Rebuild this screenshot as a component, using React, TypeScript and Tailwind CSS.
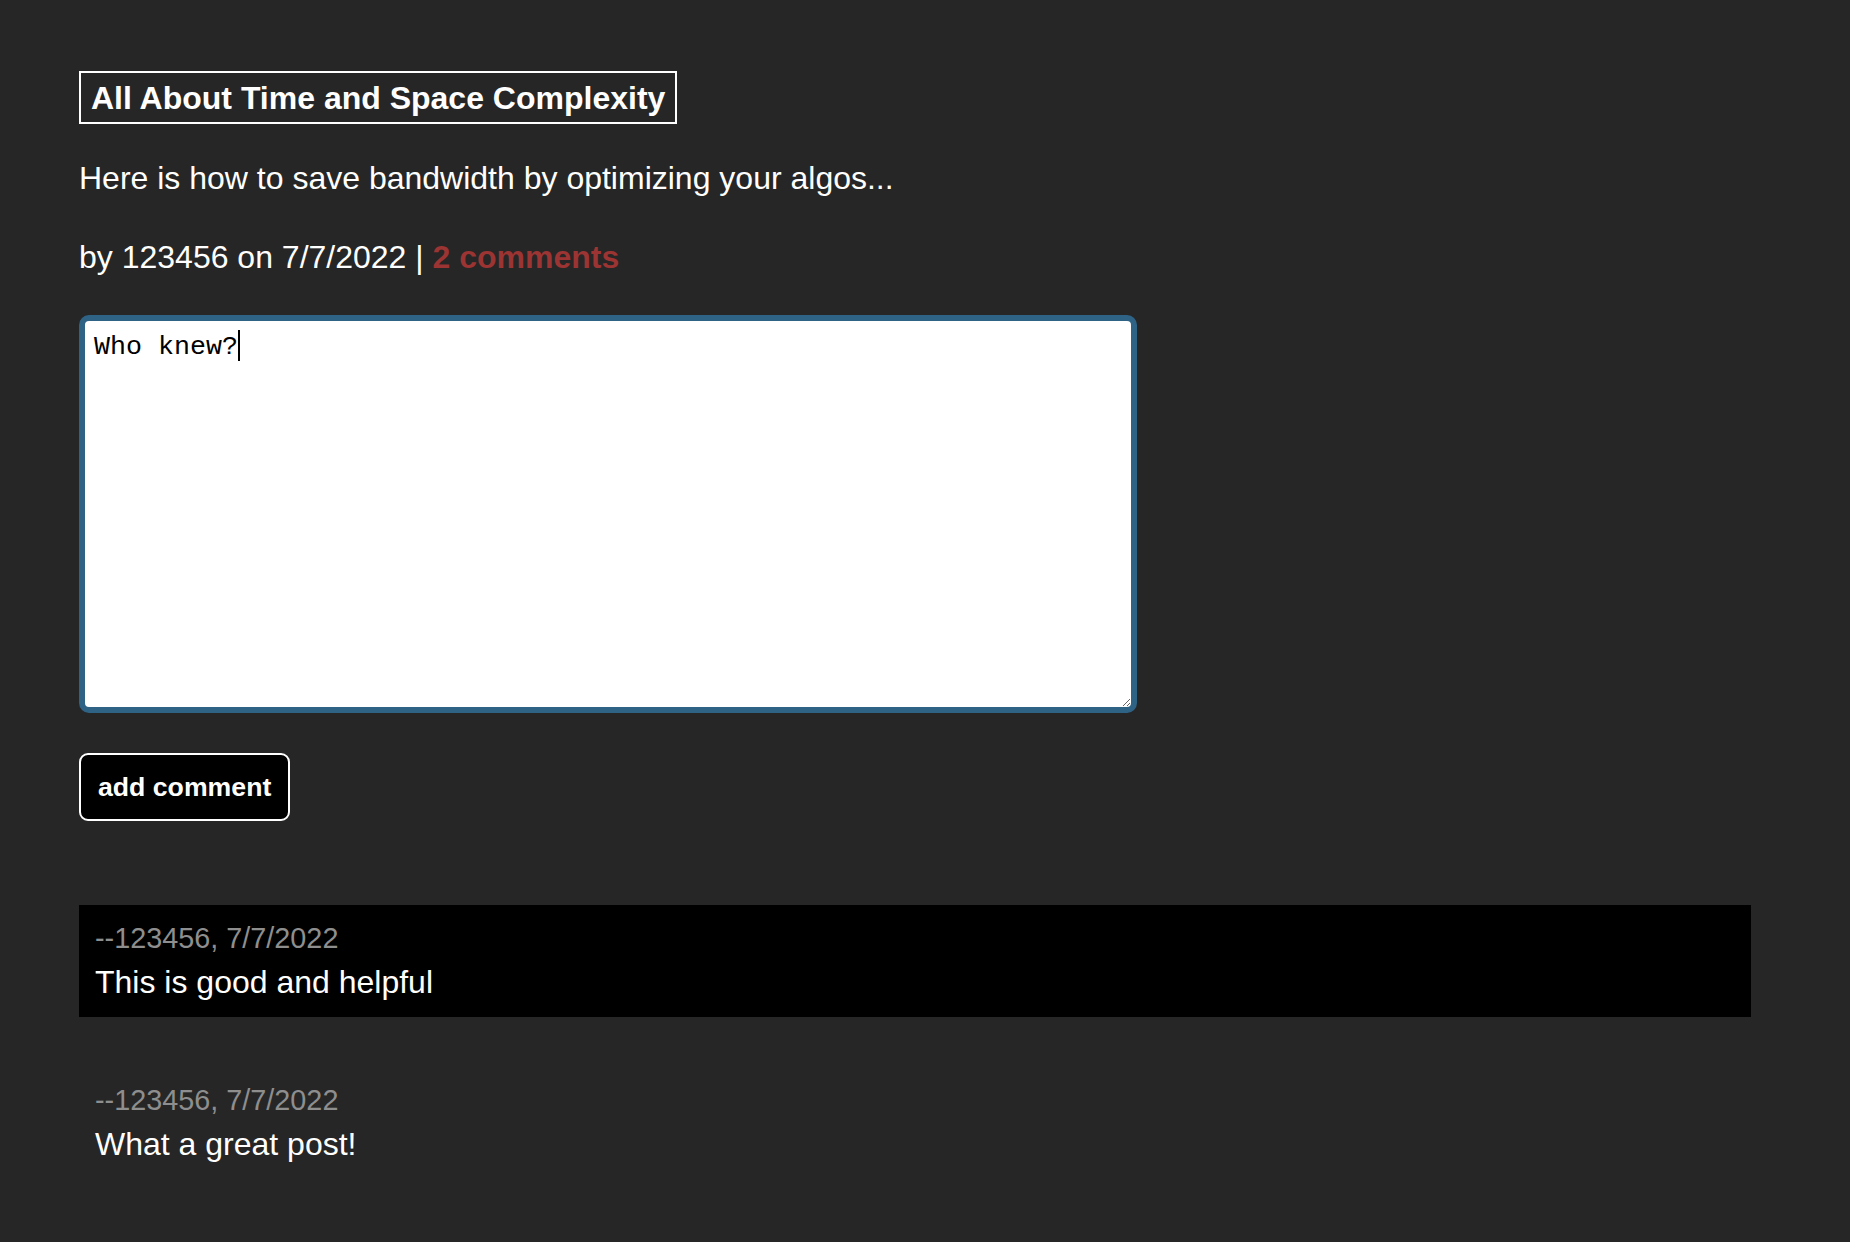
import { useState } from 'react';

interface Comment {
  author: string;
  date: string;
  body: string;
}

const comments: Comment[] = [
  { author: '123456', date: '7/7/2022', body: 'This is good and helpful' },
  { author: '123456', date: '7/7/2022', body: 'What a great post!' },
];

export default function App() {
  const [draft, setDraft] = useState('Who knew?');

  return (
    <div className="min-h-screen bg-[#262626] pl-[79px] pt-[71px] pb-10 font-['Liberation_Sans',Arial,sans-serif] text-white">
      {/* Post header */}
      <h1 className="w-fit border-2 border-white px-[10px] pt-[7px] pb-[5px] text-[32px] font-bold leading-[37px]">
        All About Time and Space Complexity
      </h1>
      <p className="mt-[36px] text-[32px] leading-[37px]">
        Here is how to save bandwidth by optimizing your algos...
      </p>
      <p className="mt-[42px] text-[32px] leading-[37px]">
        by 123456 on 7/7/2022 |{' '}
        <a href="#comments" className="font-bold text-[#9b3432]">
          {comments.length} comments
        </a>
      </p>

      {/* New comment */}
      <div className="relative mt-[39px] w-[1058px]">
        <textarea
          value={draft}
          onChange={(e) => setDraft(e.target.value)}
          className="block h-[398px] w-full rounded-[10px] border-[6px] border-[#2f6386] bg-white pt-[11px] pl-[9px] pr-[9px] font-['Liberation_Mono','Courier_New',monospace] text-[26.67px] leading-[30px] text-black caret-transparent outline-none"
        />
        <span className="pointer-events-none absolute left-[159px] top-[15px] h-[31px] w-[1.5px] bg-black" />
      </div>
      <button className="mt-[40px] block rounded-[9px] border-2 border-white bg-black px-[17px] py-[17px] text-[26.67px] font-bold leading-[30px] text-white">
        add comment
      </button>

      {/* Comment list */}
      <div id="comments" className="mt-[84px] flex w-[1672px] flex-col gap-[50px]">
        {comments.map((c, i) => (
          <div key={i} className={`px-4 pt-[17px] pb-[16px] ${i % 2 === 0 ? 'bg-black' : ''}`}>
            <div className="text-[28.8px] leading-[33px] text-[#8e8e8e]">
              --{c.author}, {c.date}
            </div>
            <div className="mt-[9px] text-[32px] leading-[37px]">{c.body}</div>
          </div>
        ))}
      </div>
    </div>
  );
}
